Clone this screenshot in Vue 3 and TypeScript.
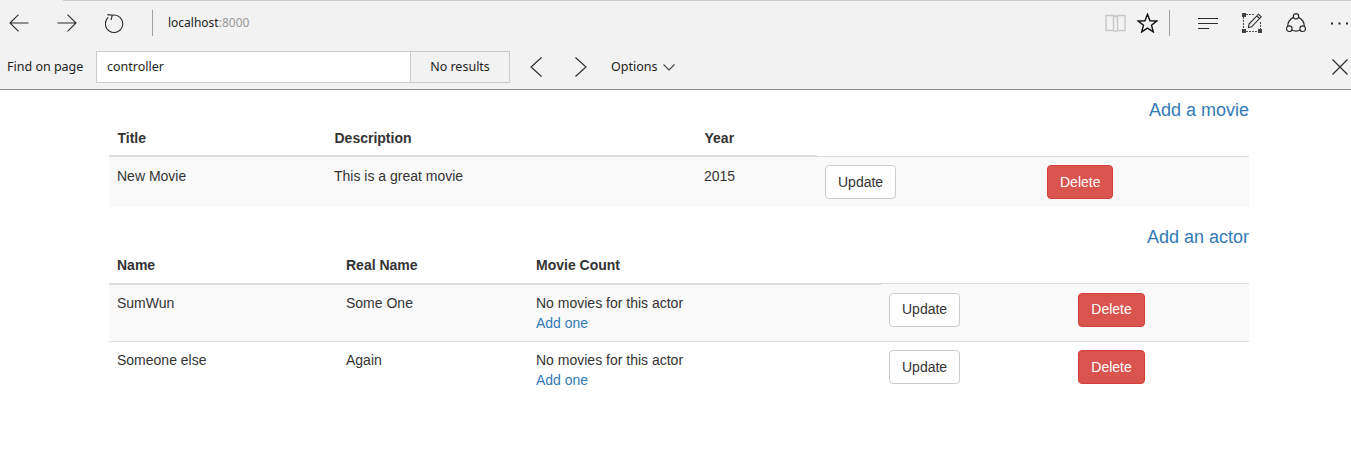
<script setup lang="ts">
interface Row {
  cells: string[]
  addLink?: boolean
}

const movieCols = [217, 370, 121, 222, 210]
const actorCols = [229, 190, 353, 189, 179]

const movies: Row[] = [{ cells: ['New Movie', 'This is a great movie', '2015'] }]
const actors: Row[] = [
  { cells: ['SumWun', 'Some One', 'No movies for this actor'], addLink: true },
  { cells: ['Someone else', 'Again', 'No movies for this actor'], addLink: true },
]

const tables = [
  { link: 'Add a movie', cls: 'movies', cols: movieCols, heads: ['Title', 'Description', 'Year'], rows: movies },
  { link: 'Add an actor', cls: 'actors', cols: actorCols, heads: ['Name', 'Real Name', 'Movie Count'], rows: actors },
]
</script>

<template>
  <div class="browser">
    <header class="chrome">
      <div class="top-line"></div>
      <div class="nav-row">
        <svg class="ic back" width="20" height="18" viewBox="0 0 20 18"><path d="M19.5 9H1M9.5.7 1 9l8.500 8.300" /></svg>
        <svg class="ic forward" width="20" height="18" viewBox="0 0 20 18"><path d="M.5 9H19M10.500.7 19 9l-8.500 8.300" /></svg>
        <svg class="ic reload" width="19" height="19" viewBox="0 0 19 19"><path d="M7.300 1.200A8.700 8.700 0 1 1 3.200 3.300M2.300.6l5 .6L6 6" /></svg>
        <span class="sep first"></span>
        <span class="url">localhost<span class="port">:8000</span></span>
        <svg class="ic book" width="21" height="18" viewBox="0 0 21 18"><path d="M1 1.500h7.500l2 1 2-1H20v15h-7.500l-2 .8-2-.8H1zM8.500 1.500v15M12.500 1.500v15" /></svg>
        <svg class="ic star" width="21" height="20" viewBox="0 0 21 20"><path d="M10.500 1.200 13 7.700l6.800.3-5.300 4.300 1.800 6.600-5.800-3.800-5.800 3.800 1.800-6.600L1.200 8 8 7.700z" /></svg>
        <span class="sep second"></span>
        <svg class="ic hub" width="20" height="13" viewBox="0 0 20 13"><path d="M0 1.500h20M0 6.500h20M0 11.500h11" /></svg>
        <svg class="ic note" width="20" height="20" viewBox="0 0 20 20">
          <path class="dash" d="M4 1.500h8M1.500 4v12M4 18.500h12M18.500 9v7" />
          <path class="corner" d="M0 0h4v4H0zM0 16h4v4H0zM16 16h4v4h-4z" />
          <path d="M6.500 14.500 7 11 16.500 1.200l2.800 2.600L9.600 13.800zM15 3l2.600 2.600" />
        </svg>
        <svg class="ic share" width="20" height="20" viewBox="0 0 20 20">
          <circle cx="10" cy="3.300" r="2.700" />
          <circle cx="3.300" cy="15.700" r="2.800" />
          <circle cx="16.700" cy="15.700" r="2.800" />
          <path d="M7.500 4.400C4 6.200 1.700 9.200 1.800 13.100M12.500 4.400c3.500 1.800 5.800 4.800 5.700 8.700M6 17.300c2.700 1 5.300 1 8 0" />
        </svg>
        <svg class="dots" width="17" height="3" viewBox="0 0 17 3"><path d="M0 .5h2v2H0zM7.500 .5h2v2h-2zM15 .5h2v2h-2z" /></svg>
      </div>
      <div class="find-row">
        <span class="find-label">Find on page</span>
        <div class="find-box">
          <span class="find-input">controller</span>
          <span class="find-result">No results</span>
        </div>
        <svg class="ic prev" width="12" height="20" viewBox="0 0 12 20"><path d="M11.500 .5 1 10l10.500 9.500" /></svg>
        <svg class="ic next" width="12" height="20" viewBox="0 0 12 20"><path d="M.5 .5 11 10 .5 19.500" /></svg>
        <span class="options">Options</span>
        <svg class="ic caret" width="12" height="7" viewBox="0 0 12 7"><path d="M.5.5 6 6 11.500.5" /></svg>
        <svg class="ic close" width="16" height="16" viewBox="0 0 16 16"><path d="M.5.500l15 15M15.500.5l-15 15" /></svg>
      </div>
    </header>

    <main class="page">
      <section v-for="table in tables" :key="table.link">
        <div class="add-link"><a>{{ table.link }}</a></div>
        <table class="data" :class="table.cls">
          <colgroup>
            <col v-for="(w, i) in table.cols" :key="i" :style="{ width: w + 'px' }" />
          </colgroup>
          <thead>
            <tr>
              <th v-for="h in table.heads" :key="h">{{ h }}</th>
            </tr>
          </thead>
          <tbody>
            <tr v-for="(row, i) in table.rows" :key="i">
              <td v-for="(c, j) in row.cells" :key="j">
                {{ c }}
                <template v-if="row.addLink && j === 2"><br /><a>Add one</a></template>
              </td>
              <td><button class="btn">Update</button></td>
              <td><button class="btn danger">Delete</button></td>
            </tr>
          </tbody>
        </table>
      </section>
    </main>
  </div>
</template>

<style>
html,
body {
  background: #fff;
  overflow: hidden;
}
</style>

<style scoped>
.browser {
  font-family: "Liberation Sans", Arial, sans-serif;
  font-size: 14px;
  line-height: 20px;
  color: #333;
}

.chrome {
  height: 89px;
  background: #f2f2f2;
  border-bottom: 1px solid #8c8c8c;
  font-family: "Noto Sans", "Open Sans", sans-serif;
  font-size: 12.5px;
  color: #222;
}

.top-line {
  height: 1px;
  margin-left: 63px;
  background: #cfcfcf;
}

.nav-row {
  display: flex;
  align-items: center;
  height: 44px;
  padding: 0 3px 0 9px;
}

.find-row {
  display: flex;
  align-items: center;
  height: 44px;
  padding-left: 7px;
}

.ic {
  flex: none;
  fill: none;
  stroke: #2b2b2b;
  stroke-width: 1.1;
}

.forward { margin-left: 28px; }
.reload { margin-left: 28px; }

.sep {
  flex: none;
  width: 1px;
  height: 26px;
  background: #a0a0a0;
}
.sep.first { margin-left: 28px; }
.sep.second { margin-left: 11px; }

.url {
  margin-left: 15px;
  font-size: 12px;
  color: #222;
}
.port { color: #9a9a9a; }

.book {
  margin-left: auto;
  stroke: #c8c8c8;
  stroke-width: 1.4;
}
.star { margin-left: 11px; stroke-width: 1.4; stroke: #111; }
.hub { margin-left: 28px; }
.note { margin-left: 24px; }
.note .dash { stroke-dasharray: 2 1; stroke: #555; }
.note .corner { fill: #444; stroke: none; }
.share { margin-left: 24px; stroke-width: 1.2; }

.dots {
  margin-left: 25px;
  fill: #222;
  flex: none;
}

.find-label { width: 89px; flex: none; }

.find-box {
  display: flex;
  width: 414px;
  height: 32px;
  border: 1px solid #ccc;
  box-sizing: border-box;
  line-height: 30px;
}
.find-input {
  flex: 1;
  padding-left: 10px;
  background: #fff;
}
.find-result {
  width: 98px;
  text-align: center;
  border-left: 1px solid #ccc;
}

.prev { margin-left: 20px; }
.next { margin-left: 33px; }
.options { margin-left: 24px; }
.caret { margin-left: 6px; stroke: #444; }
.close { margin-left: auto; margin-right: 3px; stroke-width: 1.2; }

.page {
  padding: 10px 102px 0 109px;
}

.add-link {
  text-align: right;
  font-size: 18px;
}

a { color: #337ab7; }

.data {
  width: 1140px;
  table-layout: fixed;
  border-collapse: collapse;
  margin-bottom: 20px;
}

th {
  padding: 8px;
  text-align: left;
  vertical-align: bottom;
  border-bottom: 2px solid #ddd;
}

td {
  padding: 8px;
  vertical-align: top;
  border-top: 1px solid #ddd;
}

/* first table sits a pixel tighter under its header */
.movies th {
  padding: 8px 8px 7px 8.5px;
}
.movies td:nth-child(-n + 3) {
  padding-top: 9px;
}

.actors tr:first-child td:nth-child(n + 4) {
  padding-top: 9px;
}
.actors tr:first-child .btn {
  padding-top: 5px;
  padding-bottom: 7px;
}

tbody tr:nth-child(odd) { background: #f9f9f9; }

.btn {
  display: inline-block;
  padding: 6px 12px;
  font: inherit;
  color: #333;
  background: #fff;
  border: 1px solid #ccc;
  border-radius: 4px;
}

.btn.danger {
  color: #fff;
  background: #d9534f;
  border-color: #d43f3a;
}

.actors .btn.danger {
  width: 67px;
  padding-left: 0;
  padding-right: 0;
}
</style>
